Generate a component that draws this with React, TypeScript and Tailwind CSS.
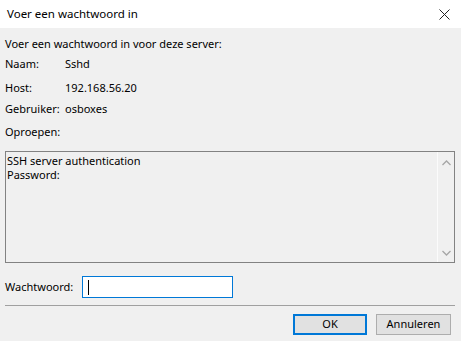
import React from "react";

function Chevron({ up }: { up?: boolean }) {
  return (
    <svg width="9" height="6" viewBox="0 0 9 6" className="block">
      <path
        d={up ? "M0.5 5 L4.5 1 L8.5 5" : "M0.5 1 L4.5 5 L8.5 1"}
        fill="none"
        stroke="#a6a6a6"
        strokeWidth="1.3"
      />
    </svg>
  );
}

export default function App() {
  return (
    <div
      className="w-[461px] h-[341px] bg-[#f0f0f0] text-[11px] text-black overflow-hidden flex flex-col"
      style={{ fontFamily: '"Noto Sans", "Open Sans", sans-serif' }}
    >
      <div className="h-[28px] bg-white flex items-center pl-[7px] pr-[11px] shrink-0">
        <span className="flex-1 text-[11.5px]">Voer een wachtwoord in</span>
        <svg width="11" height="11" viewBox="0 0 11 11">
          <path d="M0.5 0.5 L10.5 10.5 M10.5 0.5 L0.5 10.5" stroke="#222" strokeWidth="1" fill="none" />
        </svg>
      </div>
      <div className="flex flex-col px-[5px]">
        <div className="mt-[8px] h-[16px] flex items-center">Voer een wachtwoord in voor deze server:</div>
        <div className="mt-[4px] h-[16px] flex items-center">
          <span className="w-[60px]">Naam:</span>
          <span>Sshd</span>
        </div>
        <div className="mt-[8px] h-[16px] flex items-center">
          <span className="w-[60px]">Host:</span>
          <span>192.168.56.20</span>
        </div>
        <div className="mt-[5px] h-[16px] flex items-center">
          <span className="w-[60px]">Gebruiker:</span>
          <span>osboxes</span>
        </div>
        <div className="mt-[7px] h-[16px] flex items-center">Oproepen:</div>
        <div className="mt-[11px] h-[112px] w-[450px] border border-[#828282] flex">
          <div className="flex-1 pl-[1px] pt-[2px] leading-[14px]">
            <div>SSH server authentication</div>
            <div>Password:</div>
          </div>
          <div className="w-[17px] border-l border-[#fbfbfb] flex flex-col items-center justify-between pt-[8px] pb-[6px]">
            <Chevron up />
            <Chevron />
          </div>
        </div>
        <div className="mt-[13px] h-[22px] flex items-center">
          <span className="w-[77px]">Wachtwoord:</span>
          <div className="w-[151px] h-[22px] border border-[#0078d7] bg-white flex items-center pl-[5px]">
            <div className="w-px h-[15px] bg-black" />
          </div>
        </div>
        <div className="mt-[7px] h-px w-[450px] bg-[#a0a0a0]" />
        <div className="mt-[8px] flex justify-end pr-[5px] gap-[9px]">
          <button className="w-[74px] h-[21px] border-2 border-[#0078d7] bg-[#e1e1e1] flex items-center justify-center">
            OK
          </button>
          <button className="w-[75px] h-[21px] border border-[#adadad] bg-[#e1e1e1] flex items-center justify-center">
            Annuleren
          </button>
        </div>
      </div>
    </div>
  );
}
